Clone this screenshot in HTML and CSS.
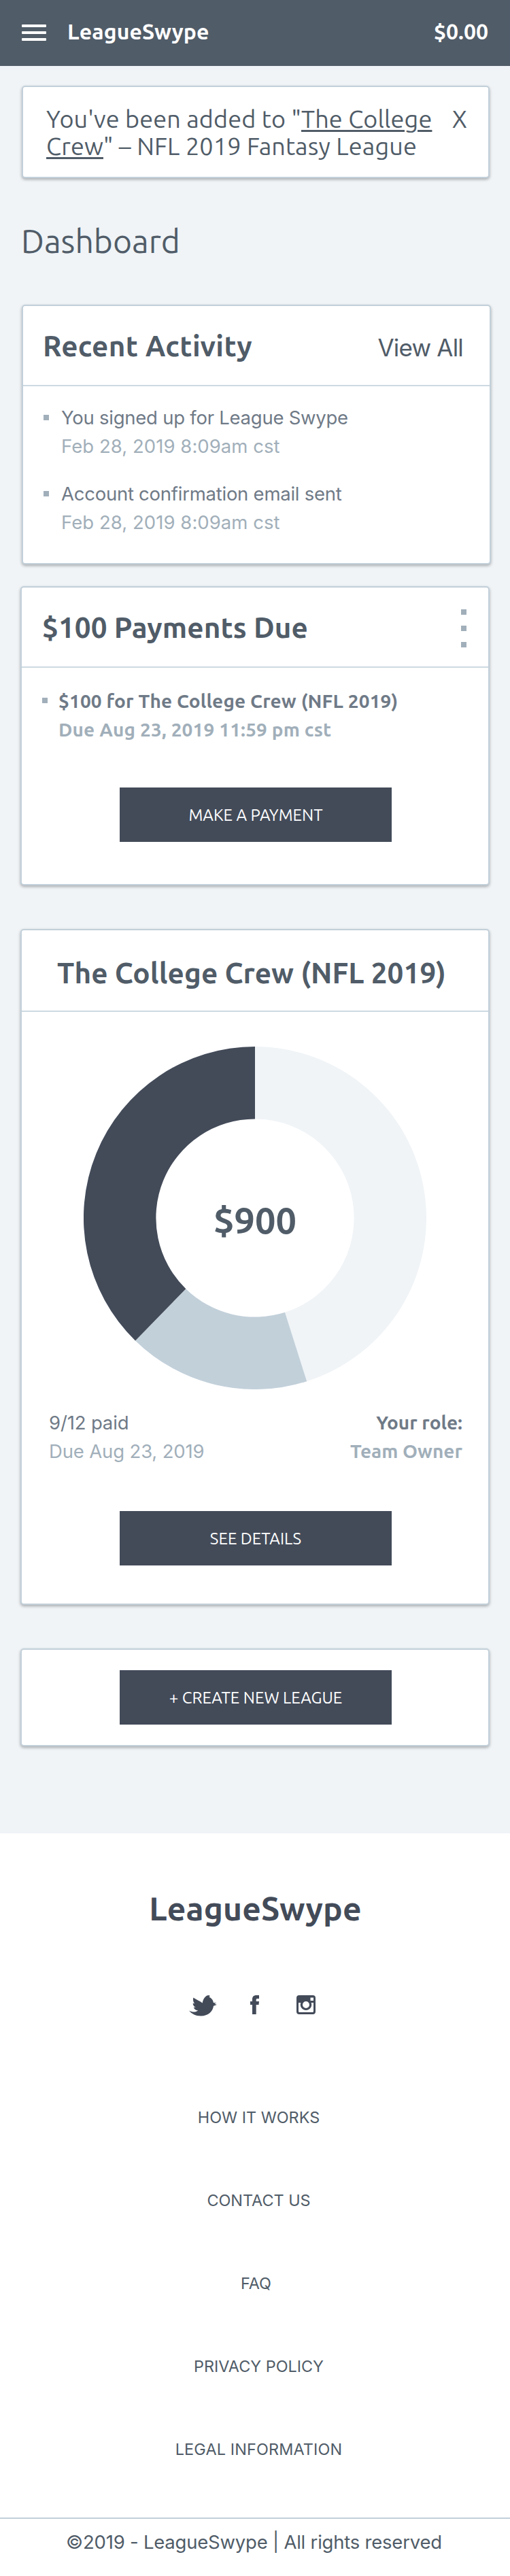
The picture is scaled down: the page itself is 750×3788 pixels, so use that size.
FILE: index.html
```html
<!DOCTYPE html>
<html lang="en">
<head>
<meta charset="utf-8">
<title>LeagueSwype</title>
<link rel="stylesheet" href="styles.css">
</head>
<body>
<header class="topbar">
  <button class="menu" aria-label="Menu"><span></span><span></span><span></span></button>
  <div class="brand">LeagueSwype</div>
  <div class="balance">$0.00</div>
</header>
<main class="main">
  <section class="card alert">
    <p class="alert-text">You've been added to "<a href="#">The College<br>Crew</a>" – NFL 2019 Fantasy League</p>
    <span class="close">X</span>
  </section>
  <h1 class="page-title">Dashboard</h1>

  <section class="card activity">
    <div class="card-head"><h2>Recent Activity</h2><a class="view-all" href="#">View All</a></div>
    <ul class="list">
      <li><div class="primary">You signed up for League Swype</div><div class="secondary">Feb 28, 2019 8:09am cst</div></li>
      <li><div class="primary">Account confirmation email sent</div><div class="secondary">Feb 28, 2019 8:09am cst</div></li>
    </ul>
  </section>

  <section class="card payments">
    <div class="card-head"><h2>$100 Payments Due</h2><div class="dots"><i></i><i></i><i></i></div></div>
    <ul class="list strong">
      <li><div class="primary">$100 for The College Crew (NFL 2019)</div><div class="secondary">Due Aug 23, 2019 11:59 pm cst</div></li>
    </ul>
    <a class="btn" href="#">MAKE A PAYMENT</a>
  </section>

  <section class="card league">
    <div class="card-head"><h2>The College Crew (NFL 2019)</h2></div>
    <svg class="donut" viewBox="-252 -252 504 504">
      <path fill="#f0f4f7" d="M0-252A252 252 0 0 1 76.2 240.2L44 138.8A145.6 145.6 0 0 0 0-145.6Z"/>
      <path fill="#c2d0da" d="M76.2 240.2A252 252 0 0 1-176 180.4L-101.7 104.2A145.6 145.6 0 0 0 44 138.8Z"/>
      <path fill="#434b59" d="M-176 180.4A252 252 0 0 1 0-252V-145.6A145.6 145.6 0 0 0-101.7 104.2Z"/>
      <text class="total" x="0" y="22.500" text-anchor="middle">$900</text>
    </svg>
    <div class="meta">
      <div><div class="primary">9/12 paid</div><div class="secondary">Due Aug 23, 2019</div></div>
      <div class="role"><div class="primary">Your role:</div><div class="secondary">Team Owner</div></div>
    </div>
    <a class="btn" href="#">SEE DETAILS</a>
  </section>

  <section class="card create"><a class="btn" href="#">+ CREATE NEW LEAGUE</a></section>
</main>

<footer class="footer">
  <div class="footer-brand">LeagueSwype</div>
  <div class="social">
    <svg class="twitter" width="41" height="31" viewBox="0 0 41 31"><path d="M0 22.5C5 25.600 10 25 13.300 22.600C9.600 22.300 7.600 20.300 6.800 17.800H9.800C7 16.500 5.600 14 5.700 11.700L8.300 12.300C6 10 5.600 6.500 6.300 3.500C10.500 6.500 16 8.300 19.700 11.500C20.600 6.300 23 2 27 .3L30.600 0L29.500 1.300H31L29.500 2.700C33 4 35.500 7.200 35.900 10.900L40.500 11L37.300 12.600L40.800 13.900L36 15.800C35 24 28 30.500 17.500 30.500C9.500 30.500 3.500 27 0 22.500Z"/></svg>
    <svg class="facebook" width="13" height="28" viewBox="0 0 13 28"><path d="M13 0V4.900H10.700C9.200 4.900 8.700 5.500 8.700 6.800V9H13L12.500 14H8.700V28H3V14H0V9H3V6C3 2 5.200 0 9 0Z"/></svg>
    <svg class="instagram" width="28" height="28" viewBox="0 0 28 28"><path fill-rule="evenodd" d="M4 0H24A4 4 0 0 1 28 4V24A4 4 0 0 1 24 28H4A4 4 0 0 1 0 24V4A4 4 0 0 1 4 0ZM20.500 3.500V8H25V3.500ZM3 11V23.500A1.500 1.500 0 0 0 4.500 25H23.500A1.500 1.500 0 0 0 25 23.500V11H21.700A8.200 8.200 0 1 1 6.300 11ZM14 9A5 5 0 1 0 14 19A5 5 0 1 0 14 9Z"/></svg>
  </div>
  <nav class="links">
    <a href="#">HOW IT WORKS</a><a href="#">CONTACT US</a><a class="faq" href="#">FAQ</a><a href="#">PRIVACY POLICY</a><a class="legal" href="#">LEGAL INFORMATION</a>
  </nav>
  <div class="copyright">©2019 - LeagueSwype | All rights reserved</div>
</footer>
</body>
</html>
```

FILE: styles.css
```css
* { box-sizing: border-box; }
body, h1, h2, p, ul { margin: 0; padding: 0; }
body { width: 750px; background: #f0f4f7; color: #505c68; font-family: Ubuntu, "Noto Sans", sans-serif; white-space: nowrap; }
a { color: inherit; text-decoration: none; }

.topbar { display: flex; align-items: flex-start; height: 97px; padding: 0 32px; background: #505c68; color: #fff; font-size: 32px; font-weight: 700; line-height: 92px; }
.menu { display: grid; gap: 6px; width: 36px; margin: 36px 31px 0 0; padding: 0; border: 0; background: none; }
.menu span { height: 4px; border-radius: 1px; background: #fff; }
.brand { letter-spacing: .1px; }
.balance { margin-left: auto; }

.main { height: 2599px; padding: 29px 30px 0; }
.card { width: 690px; border: 2px solid #c2d0da; border-radius: 5px; background: #fff; box-shadow: 0 2px 4px rgba(0, 0, 0, .3); }
.alert { display: flex; width: 688px; height: 136px; margin-left: 2px; padding: 27px 31px 0 34px; font-size: 36px; line-height: 40px; }
.alert-text { letter-spacing: .12px; }
.alert-text a { text-decoration: underline; text-decoration-thickness: 3px; text-underline-offset: 3px; }
.close { margin-left: auto; }
.page-title { margin: 62px 0 64px 1px; font-size: 48px; font-weight: 400; line-height: 60px; }

.card-head { display: flex; justify-content: space-between; height: 118px; padding: 0 39px 0 30px; border-bottom: 2px solid #cddae2; }
.card-head h2 { font-size: 42.2px; font-weight: 700; line-height: 117px; letter-spacing: .1px; }
.view-all { font: 35px/122px Inter, sans-serif; letter-spacing: -.8px; }
.list { display: grid; gap: 28px; padding: 25px 30px 0; list-style: none; }
.list li { display: grid; grid-template-columns: 8px auto; column-gap: 18px; justify-content: start; }
.list li::before { content: ""; grid-row: 1 / 3; width: 8px; height: 8px; margin-top: 17px; background: #a1afba; }
.primary, .secondary { grid-column: 2; font: 27.5px/42px Inter, sans-serif; letter-spacing: -.15px; }
.primary { color: #6f7a87; }
.secondary { color: #a1afba; }
.activity { height: 382px; margin-left: 2px; }
.activity .card-head { padding-left: 29px; }
.activity h2 { letter-spacing: .35px; }
.activity .primary { letter-spacing: -.25px; }
.activity .secondary { letter-spacing: .05px; }

.payments { height: 440px; margin-top: 32px; }
.dots { display: grid; gap: 16px; align-content: start; margin: 32px -7px 0 0; }
.dots i { width: 8px; height: 8px; background: #a1afba; }
.strong { padding: 28px 30px 0; }
.strong li { column-gap: 16px; }
.strong li::before { margin-top: 16px; }
.strong .primary, .strong .secondary, .role .primary, .role .secondary { font: 700 28px/42px Ubuntu, "Noto Sans", sans-serif; letter-spacing: .15px; }
.role .primary, .role .secondary { letter-spacing: 0; }
.btn { display: block; width: 400px; height: 80px; margin: 64px 0 0 144px; background: #434b59; color: #fff; font-size: 24px; line-height: 81px; text-align: center; }

.league { height: 994px; margin-top: 64px; }
.league .card-head { height: 120px; padding-left: 52px; }
.league h2 { line-height: 125px; }
.donut { display: block; width: 504px; height: 504px; margin: 51px 0 28px 91px; }
.total { fill: #505c68; font-size: 54px; font-weight: 700; }
.meta { display: flex; justify-content: space-between; padding: 0 38px 0 40px; }
.role { text-align: right; }
.meta + .btn { margin-top: 67px; }
.create { height: 144px; margin-top: 64px; }
.create .btn { margin-top: 30px; }

.footer { height: 1092px; padding-top: 80px; background: #fff; text-align: center; }
.footer-brand { padding-left: 1px; color: #434b59; font-size: 48px; font-weight: 700; line-height: 60px; letter-spacing: .1px; }
.social { display: flex; height: 31px; margin: 98px 0 88px 278px; fill: #434b59; }
.facebook { margin: 0 55px 0 49px; }
.links { display: grid; padding-left: 11px; font: 23.4px/122px Inter, sans-serif; }
.faq { margin-left: -8px; }
.legal { letter-spacing: .15px; }
.copyright { margin-top: 39px; padding-right: 3px; border-top: 2px solid #c2d0da; font: 27.5px/68px Inter, sans-serif; letter-spacing: -.22px; }
```
